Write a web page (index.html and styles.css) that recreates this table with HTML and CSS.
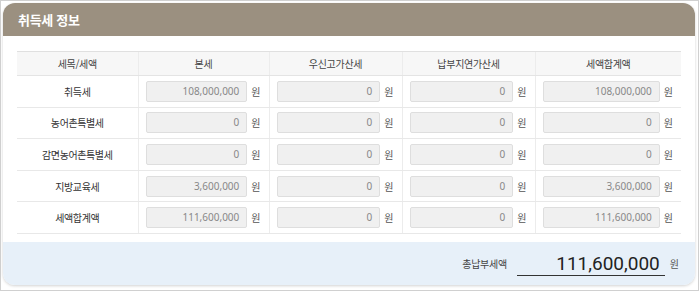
FILE: index.html
```html
<!DOCTYPE html>
<html lang="ko">
<head>
<meta charset="utf-8">
<link rel="stylesheet" href="styles.css">
</head>
<body>
<div class="frame">
  <div class="card">
    <div class="card-head">취득세 정보</div>
    <div class="card-body">
      <table class="tax">
        <colgroup>
          <col class="c1"><col class="c2"><col class="c3"><col class="c4"><col class="c5">
        </colgroup>
        <thead>
          <tr><th>세목/세액</th><th>본세</th><th>우신고가산세</th><th>납부지연가산세</th><th>세액합계액</th></tr>
        </thead>
        <tbody>
          <tr>
            <td class="name">취득세</td>
            <td><div class="fld"><span class="inp">108,000,000</span><span class="won">원</span></div></td>
            <td><div class="fld"><span class="inp">0</span><span class="won">원</span></div></td>
            <td><div class="fld"><span class="inp">0</span><span class="won">원</span></div></td>
            <td><div class="fld"><span class="inp">108,000,000</span><span class="won">원</span></div></td>
          </tr>
          <tr>
            <td class="name">농어촌특별세</td>
            <td><div class="fld"><span class="inp">0</span><span class="won">원</span></div></td>
            <td><div class="fld"><span class="inp">0</span><span class="won">원</span></div></td>
            <td><div class="fld"><span class="inp">0</span><span class="won">원</span></div></td>
            <td><div class="fld"><span class="inp">0</span><span class="won">원</span></div></td>
          </tr>
          <tr>
            <td class="name">감면농어촌특별세</td>
            <td><div class="fld"><span class="inp">0</span><span class="won">원</span></div></td>
            <td><div class="fld"><span class="inp">0</span><span class="won">원</span></div></td>
            <td><div class="fld"><span class="inp">0</span><span class="won">원</span></div></td>
            <td><div class="fld"><span class="inp">0</span><span class="won">원</span></div></td>
          </tr>
          <tr>
            <td class="name">지방교육세</td>
            <td><div class="fld"><span class="inp">3,600,000</span><span class="won">원</span></div></td>
            <td><div class="fld"><span class="inp">0</span><span class="won">원</span></div></td>
            <td><div class="fld"><span class="inp">0</span><span class="won">원</span></div></td>
            <td><div class="fld"><span class="inp">3,600,000</span><span class="won">원</span></div></td>
          </tr>
          <tr>
            <td class="name">세액합계액</td>
            <td><div class="fld"><span class="inp">111,600,000</span><span class="won">원</span></div></td>
            <td><div class="fld"><span class="inp">0</span><span class="won">원</span></div></td>
            <td><div class="fld"><span class="inp">0</span><span class="won">원</span></div></td>
            <td><div class="fld"><span class="inp">111,600,000</span><span class="won">원</span></div></td>
          </tr>
        </tbody>
      </table>
    </div>
    <div class="card-foot">
      <span class="total-label">총납부세액</span>
      <span class="total-val">111,600,000</span>
      <span class="total-won">원</span>
    </div>
  </div>
</div>
</body>
</html>
```

FILE: styles.css
```css
html, body {
  margin: 0;
  padding: 0;
  background: #fff;
}
body {
  font-family: "Noto Sans CJK KR", "Noto Sans", sans-serif;
  color: #444;
}
.frame {
  width: 699px;
  height: 291px;
  box-sizing: border-box;
  border: 1px solid #d0d0d0;
  padding: 2px 3px 4px 2px;
  background: #fff;
}
.card {
  height: 282px;
  border-radius: 12px;
  background: #fff;
  box-shadow: 0 1px 3px rgba(0,0,0,0.18);
  overflow: hidden;
  display: flex;
  flex-direction: column;
}
.card-head {
  flex: none;
  height: 33px;
  background: #9b9080;
  color: #fff;
  font-size: 13px;
  font-weight: 700;
  line-height: 33px;
  padding-left: 15px;
  letter-spacing: -0.3px;
}
.card-body {
  flex: none;
  padding: 15px 14px 0 14px;
}
.tax {
  width: 664px;
  border-collapse: collapse;
  table-layout: fixed;
}
.c1 { width: 121px; }
.c2 { width: 131px; }
.c3 { width: 133px; }
.c4 { width: 133px; }
.c5 { width: 146px; }
.tax thead tr { height: 24px; }
.tax th {
  background: #f7f7f7;
  border-top: 1px solid #e0e0e0;
  border-bottom: 1px solid #e4e4e4;
  font-size: 10px;
  font-weight: 400;
  color: #444;
  padding: 0;
  letter-spacing: -0.3px;
}
.tax th + th { border-left: 1px solid #ececec; }
.tax tbody tr { height: 31.6px; }
.tax td {
  border-bottom: 1px solid #e8e8e8;
  padding: 0 8px 0 7px;
}
.tax td + td { border-left: 1px solid #ececec; }
.tax td.name {
  text-align: center;
  font-size: 10px;
  color: #333;
  letter-spacing: -0.4px;
  padding: 0;
}
.fld {
  display: flex;
  align-items: center;
  gap: 4px;
}
.inp {
  flex: 1;
  height: 21px;
  box-sizing: border-box;
  background: #f0f0f0;
  border: 1px solid #dedede;
  border-radius: 2px;
  font-family: "Noto Sans", sans-serif;
  font-size: 10px;
  color: #888;
  text-align: right;
  line-height: 19px;
  padding-right: 7px;
}
.won {
  font-size: 10px;
  color: #555;
}
.card-foot {
  flex: 1;
  margin-top: 8px;
  background: #e7f0f9;
  display: flex;
  align-items: center;
  justify-content: flex-end;
  padding-right: 16px;
}
.total-label {
  font-size: 10px;
  color: #444;
  margin-right: 10px;
  letter-spacing: -0.3px;
}
.total-val {
  width: 148px;
  box-sizing: border-box;
  border-bottom: 1px solid #333;
  text-align: right;
  padding-right: 5px;
  font-family: Roboto, "Noto Sans", sans-serif;
  font-size: 19px;
  color: #222;
  line-height: 22px;
  margin-top: 2px;
}
.total-won {
  font-size: 10px;
  color: #555;
  margin-left: 5px;
}
```
